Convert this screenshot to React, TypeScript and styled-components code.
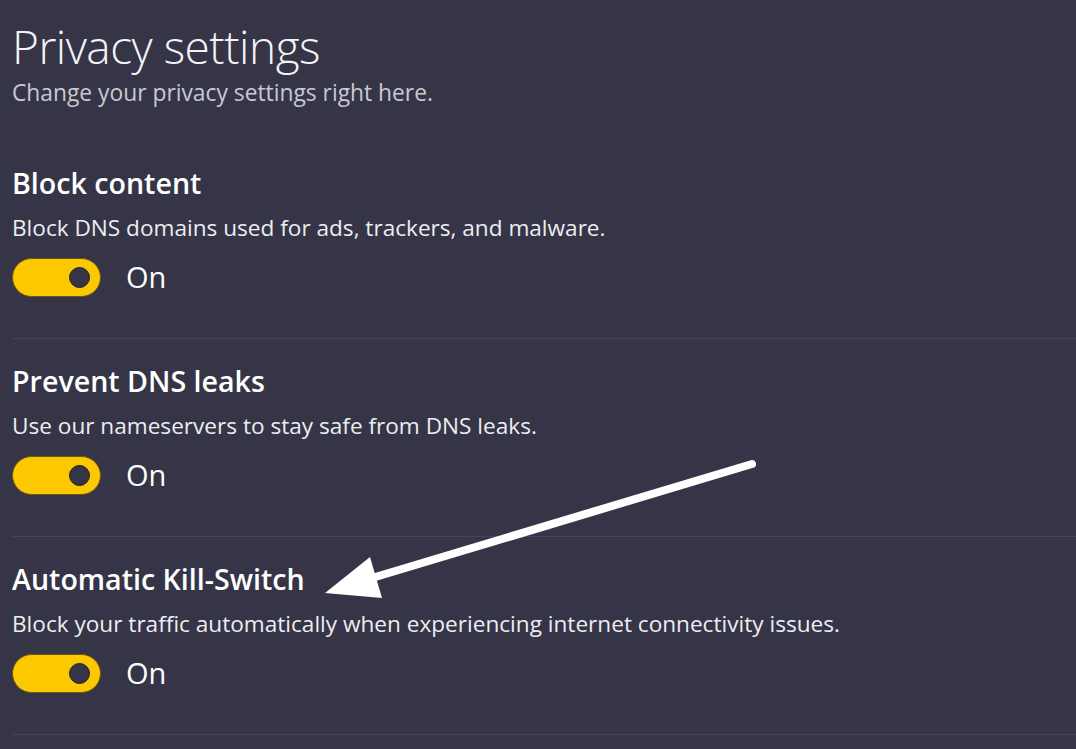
import React from "react";
import styled, {createGlobalStyle} from "styled-components";

const GlobalStyle = createGlobalStyle`
  html, body {
    margin: 0;
    padding: 0;
    background: #353547;
    font-family: "Open Sans", "Noto Sans", "Liberation Sans", sans-serif;
  }
`;

interface Setting {
  title: string;
  description: string;
  enabled: boolean;
}

const settings: Setting[] = [
  {title: "Block content", description: "Block DNS domains used for ads, trackers, and malware.", enabled: true},
  {title: "Prevent DNS leaks", description: "Use our nameservers to stay safe from DNS leaks.", enabled: true},
  {
    title: "Automatic Kill-Switch",
    description: "Block your traffic automatically when experiencing internet connectivity issues.",
    enabled: true,
  },
];

const Toggle: React.FC<{on: boolean}> = ({on}) => (
  <ToggleRow>
    <Track on={on}>
      <Knob />
    </Track>
    <ToggleLabel>{on ? "On" : "Off"}</ToggleLabel>
  </ToggleRow>
);

export default function App() {
  return (
    <Page>
      <GlobalStyle />
      <Header>
        <Title>Privacy settings</Title>
        <Subtitle>Change your privacy settings right here.</Subtitle>
      </Header>
      <List>
        {settings.map((s) => (
          <Section key={s.title}>
            <SectionTitle>{s.title}</SectionTitle>
            <Description>{s.description}</Description>
            <Toggle on={s.enabled} />
          </Section>
        ))}
      </List>
      <Annotation width="1076" height="749" viewBox="0 0 1076 749">
        <line x1="752" y1="464" x2="372" y2="578" stroke="#fff" strokeWidth="8" strokeLinecap="round" />
        <polygon points="325,593 370,557 382,598" fill="#fff" />
      </Annotation>
    </Page>
  );
}

const Page = styled.div`
  position: relative;
  width: 1076px;
  height: 749px;
  overflow: hidden;
  padding-left: 12px;
  box-sizing: border-box;
`;

const Header = styled.header`
  display: flex;
  flex-direction: column;
  padding-top: 18px;
`;

const Title = styled.h1`
  margin: 0;
  font-size: 46px;
  font-weight: 300;
  line-height: 56px;
  color: #f3f3f6;
  letter-spacing: -0.5px;
`;

const Subtitle = styled.p`
  margin: 4px 0 0;
  font-size: 22.8px;
  line-height: 30px;
  color: #c9c9d3;
`;

const List = styled.div`
  display: flex;
  flex-direction: column;
  margin-top: 57px;
`;

const Section = styled.section`
  display: flex;
  flex-direction: column;
  padding-bottom: 41px;
  margin-bottom: 24px;
  border-bottom: 1px solid #45455a;
`;

const SectionTitle = styled.h2`
  margin: 0;
  font-size: 28.6px;
  font-weight: 600;
  line-height: 36px;
  color: #ffffff;
`;

const Description = styled.p`
  margin: 12px 0 0;
  font-size: 22.6px;
  line-height: 30px;
  color: #ededf1;
`;

const ToggleRow = styled.div`
  display: flex;
  align-items: center;
  gap: 25px;
  margin-top: 14px;
  height: 40px;
`;

const Track = styled.div<{on: boolean}>`
  display: flex;
  align-items: center;
  justify-content: ${({on}) => (on ? "flex-end" : "flex-start")};
  width: 89px;
  height: 39px;
  padding: 0 10px;
  box-sizing: border-box;
  border-radius: 20px;
  background: ${({on}) => (on ? "#fcc800" : "transparent")};
  border: 1px solid #6b5712;
`;

const Knob = styled.div`
  width: 19px;
  height: 19px;
  border-radius: 50%;
  background: #353547;
  border: 1px solid #1f1f2a;
`;

const ToggleLabel = styled.span`
  font-size: 29px;
  line-height: 36px;
  color: #ffffff;
`;

const Annotation = styled.svg`
  position: absolute;
  left: 0;
  top: 0;
  pointer-events: none;
`;
